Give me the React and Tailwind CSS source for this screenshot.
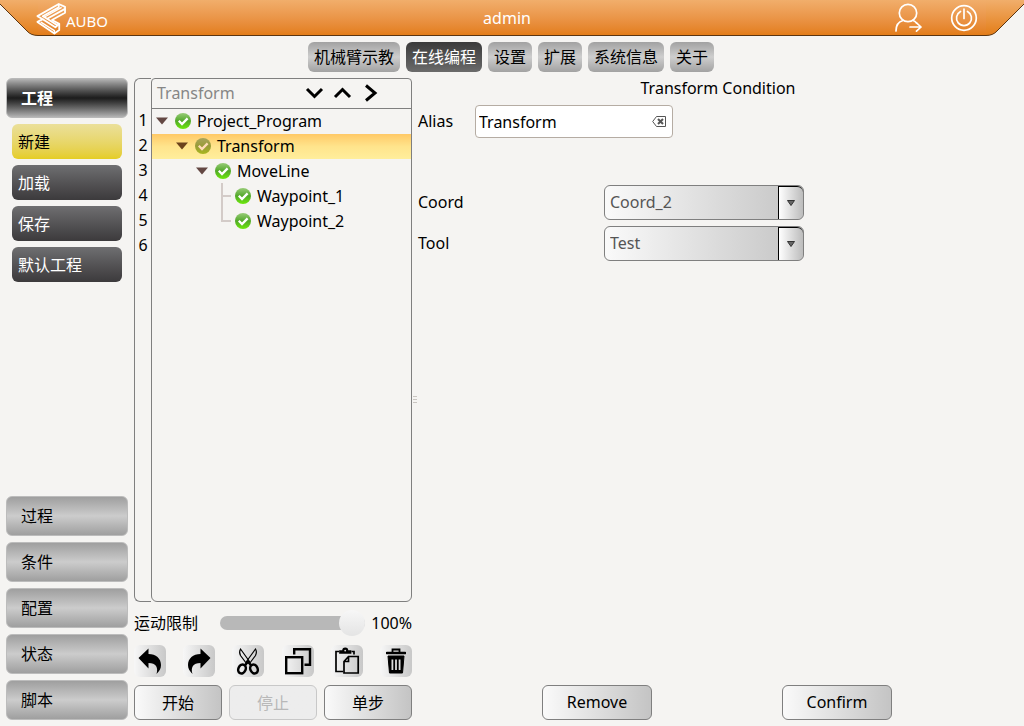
import { useState } from 'react'
import clsx from 'clsx'

const tabs = ['机械臂示教', '在线编程', '设置', '扩展', '系统信息', '关于']
const projectActions = ['新建', '加载', '保存', '默认工程']
const sections = ['过程', '条件', '配置', '状态', '脚本']

const treeRows = [
  { label: 'Project_Program', indent: 'pl-0', open: true },
  { label: 'Transform', indent: 'pl-5', open: true, selected: true },
  { label: 'MoveLine', indent: 'pl-10', open: true },
  { label: 'Waypoint_1', indent: 'pl-15' },
  { label: 'Waypoint_2', indent: 'pl-15', last: true },
]

const Logo = () => (
  <svg width="30" height="33" viewBox="0 0 31 33" fill="none" stroke="white" strokeWidth="1.9" strokeLinejoin="round">
    <path d="M23.5 1.5 L1.5 14 L7 17.2 L1.5 20 L19 32 L24 28.5 L24 22 L16.5 18 L30 10.5 L30 4.5 Z" />
    <path d="M23.5 1.5 V5 L7 14.2 L11.5 16.8 L30 6.5" />
    <path d="M26.5 5 L8.5 15.2" strokeWidth="1.3" />
    <path d="M7 17.2 L20 25.5 L24 22" />
    <path d="M5 20.2 L19 29 V32" strokeWidth="1.5" />
    <path d="M11.5 16.8 L22 23.5" />
  </svg>
)

const UserIcon = () => (
  <svg width="28" height="30" viewBox="0 0 28 30" fill="none" stroke="white" strokeWidth="1.7" strokeLinecap="round" strokeLinejoin="round">
    <circle cx="14" cy="10" r="8.7" />
    <path d="M2 28 C2 22 5 18.5 9 17.5 M19 17.5 C20.5 18 21.5 18.8 22.5 20" />
    <path d="M16 24 H27 M22.5 19.8 L27 24 L22.5 28.2" />
  </svg>
)

const PowerIcon = () => (
  <svg width="28" height="28" viewBox="0 0 28 28" fill="none" stroke="white" strokeWidth="1.7" strokeLinecap="round">
    <circle cx="14" cy="14" r="12.3" />
    <path d="M10.5 7.5 A7.5 7.5 0 1 0 17.5 7.5" />
    <path d="M14 5 V14.5" />
  </svg>
)

const CheckIcon = ({ selected }) => (
  <svg width="16" height="16" viewBox="0 0 16 16">
    <defs>
      <linearGradient id={selected ? 'ballSelected' : 'ball'} x1="0" y1="0" x2="0" y2="1">
        <stop offset="0" stopColor={selected ? '#a8a45c' : '#98cc78'} />
        <stop offset="0.5" stopColor={selected ? '#999b38' : '#52a82a'} />
        <stop offset="1" stopColor={selected ? '#a8b71e' : '#6dea0c'} />
      </linearGradient>
    </defs>
    <circle cx="8" cy="8" r="8" fill={selected ? 'url(#ballSelected)' : 'url(#ball)'} />
    <path d="M3.8 7.8 L7 11 L12.6 5.4" fill="none" stroke={selected ? '#ffdcb8' : 'white'} strokeWidth="2.3" />
  </svg>
)

const UndoIcon = () => (
  <svg width="24" height="26" viewBox="0 0 24 26">
    <path d="M0.5 10 L10.5 0.5 V6 C18 6 23 10.5 23 17 C23 20.5 21.5 23 18.5 26 C20.5 19.5 18 15 10.5 15 V20.5 Z" />
  </svg>
)

const RedoIcon = () => (
  <svg width="24" height="26" viewBox="0 0 24 26">
    <path d="M23.5 10 L13.5 0.5 V6 C6 6 1 10.5 1 17 C1 20.5 2.5 23 5.5 26 C3.5 19.5 6 15 13.5 15 V20.5 Z" />
  </svg>
)

const CutIcon = () => (
  <svg width="24" height="28" viewBox="0 0 24 28" fill="none" stroke="black">
    <path d="M4.5 2 C3 4.5 3.5 6.5 4.5 8.5 L10.5 16.5 L13.5 14.5 Z" strokeWidth="1.2" />
    <path d="M19.5 2 C21 4.5 20.5 6.5 19.5 8.5 L13.5 16.5 L10.5 14.5 Z" strokeWidth="1.2" />
    <path d="M8.5 19 L12 14.5 L15.5 19" strokeWidth="2.4" />
    <ellipse cx="6" cy="22" rx="3.6" ry="4.6" transform="rotate(25 6 22)" strokeWidth="2.5" />
    <ellipse cx="18" cy="22" rx="3.6" ry="4.6" transform="rotate(-25 18 22)" strokeWidth="2.5" />
  </svg>
)

const CopyIcon = () => (
  <svg width="28" height="28" viewBox="0 0 28 28" fill="none" stroke="black" strokeWidth="2.4">
    <rect x="2.2" y="10.2" width="16" height="16" />
    <path d="M10.2 7.5 V2.2 H26 V17.8 H20.5" />
  </svg>
)

const PasteIcon = () => (
  <svg width="26" height="28" viewBox="0 0 26 28" fill="none" stroke="black" strokeWidth="1.7">
    <path d="M9 24.5 H2 V4.5 H5 M17.5 4.5 H20 V7.5" />
    <path d="M6 6 V4 H9 C9 0.5 13.5 0.5 13.5 4 H16.5 V6 Z" fill="black" />
    <path d="M14.5 9.5 H24.2 V26 H10 V14.5 Z M14.5 9.5 V14.5 H10" />
    <circle cx="11.2" cy="3.6" r="0.9" fill="#dddddd" stroke="none" />
  </svg>
)

const TrashIcon = () => (
  <svg width="20" height="28" viewBox="0 0 20 28" fill="none" stroke="black">
    <path d="M1 6 H19" strokeWidth="2.6" strokeLinecap="round" />
    <path d="M6.5 5 V2.5 H13.5 V5" strokeWidth="1.8" />
    <path d="M2 9 H18 L16.5 26 H3.5 Z" fill="black" strokeWidth="1" />
    <path d="M6.4 12.5 V23 M10 12.5 V23 M13.6 12.5 V23" stroke="#dddddd" strokeWidth="1.8" />
  </svg>
)

const tools = [
  { name: 'Undo', Icon: UndoIcon },
  { name: 'Redo', Icon: RedoIcon },
  { name: 'Cut', Icon: CutIcon },
  { name: 'Copy', Icon: CopyIcon },
  { name: 'Paste', Icon: PasteIcon },
  { name: 'Delete', Icon: TrashIcon },
]

const Header = () => (
  <header className="relative h-9 shrink-0">
    <div className="absolute inset-0 flex">
      <svg width="38" height="36" viewBox="0 0 38 36">
        <defs>
          <linearGradient id="barLeft" x1="0" y1="0" x2="0" y2="1">
            <stop offset="0" stopColor="#f1ae6b" />
            <stop offset="1" stopColor="#e37d18" />
          </linearGradient>
        </defs>
        <path d="M0 0 V4 L27 31 Q31 35.5 38 35.5 V0 Z" fill="url(#barLeft)" />
        <path d="M0 4 L27 31 Q31 35.5 38 35.5" fill="none" stroke="#5b3511" />
      </svg>
      <div className="flex-1 bg-linear-to-b from-[#f1ae6b] to-[#e37d18] border-b border-[#5b3511]" />
      <svg width="38" height="36" viewBox="0 0 38 36">
        <defs>
          <linearGradient id="barRight" x1="0" y1="0" x2="0" y2="1">
            <stop offset="0" stopColor="#f1ae6b" />
            <stop offset="1" stopColor="#e37d18" />
          </linearGradient>
        </defs>
        <path d="M38 0 V4 L11 31 Q7 35.5 0 35.5 V0 Z" fill="url(#barRight)" />
        <path d="M38 4 L11 31 Q7 35.5 0 35.5" fill="none" stroke="#5b3511" />
      </svg>
    </div>
    <div className="relative flex h-full items-center pr-2.5 text-white">
      <div className="flex flex-1 items-center pl-9">
        <Logo />
        <span className="pt-1.5 text-[15px]">AUBO</span>
      </div>
      <span>admin</span>
      <div className="flex flex-1 items-center justify-end gap-7 pr-9">
        <button type="button" aria-label="Switch user">
          <UserIcon />
        </button>
        <button type="button" aria-label="Power">
          <PowerIcon />
        </button>
      </div>
    </div>
  </header>
)

const Sidebar = () => (
  <aside className="flex w-[122px] shrink-0 flex-col gap-1.5">
    <button
      type="button"
      className="h-10 rounded-md border border-[#b9b9b9] bg-linear-to-b from-[#b4b4b4] via-[#1c1c1c] to-[#b4b4b4] px-3.5 text-left font-bold text-white"
    >
      工程
    </button>
    <div className="flex flex-1 flex-col gap-1.5 px-1.5">
      {projectActions.map((label, i) => (
        <button
          key={label}
          type="button"
          className={clsx(
            'h-[35px] rounded-md bg-linear-to-b px-1.5 text-left',
            i === 0 ? 'from-[#ebe09a] to-[#e5cd22] text-black' : 'from-[#6f6f71] to-[#3c3a3c] text-white'
          )}
        >
          {label}
        </button>
      ))}
    </div>
    {sections.map((label) => (
      <button
        key={label}
        type="button"
        className="h-10 rounded-md border border-[#bcbcbc] bg-linear-to-b from-[#9f9f9f] via-[#cccccc] to-[#9f9f9f] px-3.5 text-left"
      >
        {label}
      </button>
    ))}
  </aside>
)

const TreeRow = ({ row }) => (
  <li
    role="treeitem"
    aria-selected={!!row.selected}
    className={clsx(
      'flex h-[25px] items-center pb-0.5',
      row.indent,
      row.selected && 'bg-linear-to-b from-[#ffc966] via-[#ffe48c] to-[#ffee9c]'
    )}
  >
    {row.open ? (
      <button type="button" aria-label="Collapse" className="w-[23px] pl-1">
        <svg width="12" height="8" viewBox="0 0 12 8">
          <path d="M0 0.5 H12 L6 7.5 Z" fill={row.selected ? '#6b421c' : '#634743'} />
        </svg>
      </button>
    ) : (
      <svg width="23" height="25" viewBox="0 0 23 25" fill="none" stroke="#d3cbc8" strokeWidth="2">
        <path d={row.last ? 'M10 0 V13 H19' : 'M10 0 V25 M10 13 H19'} />
      </svg>
    )}
    <CheckIcon selected={row.selected} />
    <span className="pl-1.5">{row.label}</span>
  </li>
)

const ProgramTree = () => (
  <div className="flex flex-1">
    <ol className="w-[17px] rounded-l-md border-y border-l border-[#7f7f7f] pt-[30px] text-center">
      {[1, 2, 3, 4, 5, 6].map((n) => (
        <li key={n} className="h-[25px] leading-[23px]">
          {n}
        </li>
      ))}
    </ol>
    <div className="flex-1 rounded-t-sm rounded-b-md border border-[#7f7f7f]">
      <div className="flex h-[30px] items-center border-b border-[#7f7f7f] pr-[27px] pb-0.5 pl-[5px]">
        <span className="flex-1 text-[#868686]">Transform</span>
        {[
          { name: 'Next', d: 'M7 6 L14.5 13.5 L22 6' },
          { name: 'Previous', d: 'M7 14 L14.5 6.5 L22 14' },
          { name: 'Enter', d: 'M10 2.5 L19 10 L10 17.5' },
        ].map(({ name, d }) => (
          <button key={name} type="button" aria-label={name}>
            <svg width="28" height="20" viewBox="0 0 28 20" fill="none" stroke="black" strokeWidth="3">
              <path d={d} />
            </svg>
          </button>
        ))}
      </div>
      <ul role="tree">
        {treeRows.map((row) => (
          <TreeRow key={row.label} row={row} />
        ))}
      </ul>
    </div>
  </div>
)

const buttonClass =
  'h-[35px] rounded-md border border-[#7f7f7f] bg-linear-to-r from-[#fafafa] to-[#c4c4c4] disabled:border-[#c8c8c8] disabled:from-[#ededed] disabled:to-[#ededed] disabled:text-[#b8b8b8]'

const EditorPanel = () => {
  const [speed, setSpeed] = useState(100)

  return (
    <section className="flex w-[278px] shrink-0 flex-col">
      <ProgramTree />
      <div className="flex h-[43px] items-center pb-0.5">
        <label htmlFor="speed" className="flex-1">
          运动限制
        </label>
        <input
          id="speed"
          type="range"
          min="0"
          max="100"
          value={speed}
          onChange={(e) => setSpeed(e.target.value)}
          className="h-[26px] w-[145px] appearance-none bg-transparent [&::-webkit-slider-runnable-track]:h-3.5 [&::-webkit-slider-runnable-track]:rounded-full [&::-webkit-slider-runnable-track]:bg-[#b8b8b8] [&::-webkit-slider-thumb]:-mt-1.5 [&::-webkit-slider-thumb]:size-[26px] [&::-webkit-slider-thumb]:appearance-none [&::-webkit-slider-thumb]:rounded-full [&::-webkit-slider-thumb]:bg-linear-to-b [&::-webkit-slider-thumb]:from-[#f7f7f7] [&::-webkit-slider-thumb]:to-[#e4e4e4]"
        />
        <span className="w-[47px] text-right">{speed}%</span>
      </div>
      <div className="flex justify-between">
        {tools.map(({ name, Icon }) => (
          <button
            key={name}
            type="button"
            aria-label={name}
            className="flex size-8 items-center justify-center rounded-md bg-linear-to-r from-[#f7f7f7] to-[#c8c8c8]"
          >
            <Icon />
          </button>
        ))}
      </div>
      <div className="grid grid-cols-3 gap-[7px] pt-2">
        <button type="button" className={buttonClass}>
          开始
        </button>
        <button type="button" disabled className={buttonClass}>
          停止
        </button>
        <button type="button" className={buttonClass}>
          单步
        </button>
      </div>
    </section>
  )
}

const SelectField = ({ id, label, value }) => (
  <div className="flex h-[35px] items-center">
    <label htmlFor={id} className="w-[186px] pb-0.5">
      {label}
    </label>
    <div className="relative h-full w-[200px]">
      <select
        id={id}
        className="size-full appearance-none rounded-md border border-[#7f7f7f] bg-linear-to-r from-[#fafafa] to-[#c4c4c4] px-[5px] pb-0.5 text-[#555555]"
      >
        <option>{value}</option>
      </select>
      <span className="pointer-events-none absolute inset-y-px right-px flex w-[25px] items-center justify-center rounded-r-md border-t border-l border-black bg-linear-to-r from-white to-[#bcbcbc]">
        <svg width="8" height="6" viewBox="0 0 8 6">
          <path d="M0.5 0.5 H7.5 L4 5.5 Z" fill="#666666" stroke="#333333" />
        </svg>
      </span>
    </div>
  </div>
)

const ConditionPanel = () => {
  const [alias, setAlias] = useState('Transform')

  return (
    <main className="flex flex-1 flex-col">
      <h1 className="h-[27px] text-center leading-5">Transform Condition</h1>
      <div className="flex h-[33px] items-center">
        <label htmlFor="alias" className="w-[57px] pb-0.5">
          Alias
        </label>
        <div className="flex h-full w-[198px] items-center rounded border border-[#b5aca3] bg-white pr-1.5 pl-[3px]">
          <input
            id="alias"
            type="text"
            value={alias}
            onChange={(e) => setAlias(e.target.value)}
            className="h-full min-w-0 flex-1 outline-none"
          />
          <button type="button" aria-label="Clear" onClick={() => setAlias('')}>
            <svg width="14" height="11" viewBox="0 0 14 11" fill="none" stroke="#555555">
              <path d="M4.5 0.5 H13.5 V10.5 H4.5 L0.7 5.5 Z" />
              <path d="M6 3 L11 8 M11 3 L6 8" strokeWidth="2" />
            </svg>
          </button>
        </div>
      </div>
      <div className="flex flex-1 flex-col gap-1.5 pt-[47px]">
        <SelectField id="coord" label="Coord" value="Coord_2" />
        <SelectField id="tool" label="Tool" value="Test" />
      </div>
      <div className="flex justify-center gap-[130px] pr-0.5">
        <button type="button" className={clsx(buttonClass, 'w-[110px] pb-0.5')}>
          Remove
        </button>
        <button type="button" className={clsx(buttonClass, 'w-[110px] pb-0.5')}>
          Confirm
        </button>
      </div>
    </main>
  )
}

const App = () => {
  const [tab, setTab] = useState('在线编程')

  return (
    <div className="flex min-h-screen flex-col bg-[#f5f4f2] font-['Noto_Sans','Noto_Sans_CJK_SC',sans-serif] text-[16px] leading-5 text-black">
      <Header />
      <nav className="flex justify-center gap-1.5 py-1.5 pr-0.5">
        {tabs.map((label) => (
          <button
            key={label}
            type="button"
            onClick={() => setTab(label)}
            className={clsx(
              'h-[30px] rounded-md bg-linear-to-b px-1.5',
              label === tab
                ? 'from-[#3b3b3b] to-[#6b6b6b] text-white'
                : 'from-[#a2a2a2] via-[#cecece] to-[#a2a2a2]'
            )}
          >
            {label}
          </button>
        ))}
      </nav>
      <div className="flex flex-1 px-1.5 pb-1.5">
        <Sidebar />
        <div className="w-1.5" />
        <EditorPanel />
        <div className="flex w-1.5 flex-col items-center justify-center gap-0.5">
          <span className="h-px w-1 bg-[#c9c5c1]" />
          <span className="h-px w-1 bg-[#c9c5c1]" />
          <span className="h-px w-1 bg-[#c9c5c1]" />
        </div>
        <ConditionPanel />
      </div>
    </div>
  )
}

export default App
